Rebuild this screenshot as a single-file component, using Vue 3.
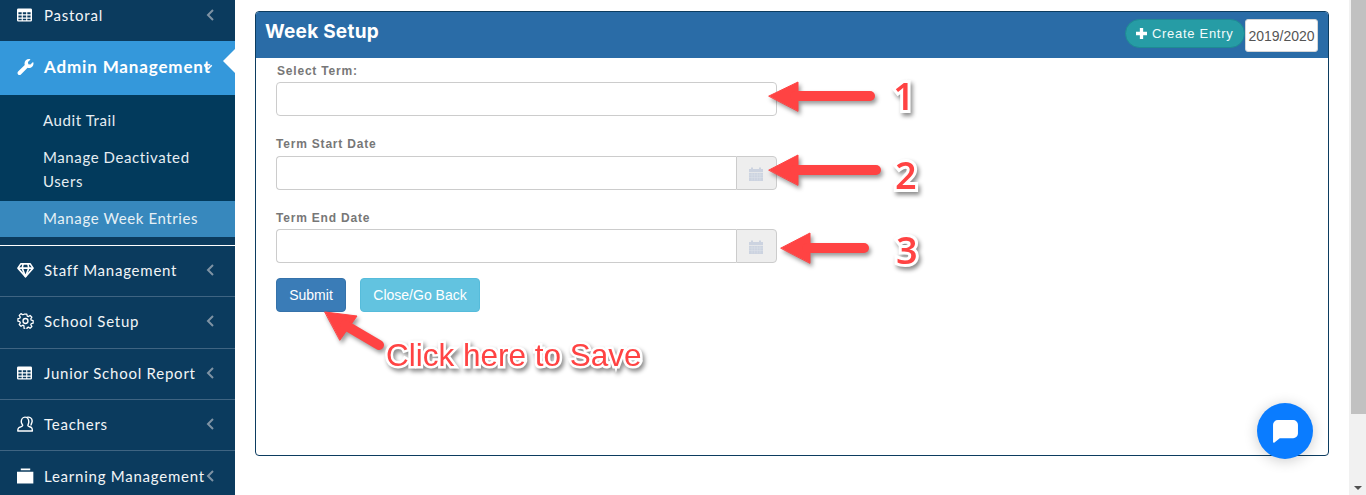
<script setup>
const angle = 'M9 3 4 8l5 5';
const lowerRows = [
  { label: 'Staff Management', icon: 'gem' },
  { label: 'School Setup', icon: 'cog' },
  { label: 'Junior School Report', icon: 'table' },
  { label: 'Teachers', icon: 'users' },
  { label: 'Learning Management', icon: 'folder' }
];
const fields = [
  { label: 'Select Term:', addon: false, cls: 'first' },
  { label: 'Term Start Date', addon: true, cls: 'second' },
  { label: 'Term End Date', addon: true, cls: 'last' }
];
</script>

<template>
  <div class="page">
    <aside class="sidebar">
      <div class="row top-row">
        <svg class="ico narrow" viewBox="0 0 16 14"><path fill="#fff" fill-rule="evenodd" d="M1.500 0h13A1.500 1.500 0 0 1 16 1.500v11a1.500 1.500 0 0 1-1.500 1.500h-13A1.500 1.500 0 0 1 0 12.500v-11A1.500 1.500 0 0 1 1.500 0zM1.500 4v2.300h3.500V4zm4.700 0v2.300h3.600V4zm4.800 0v2.300h3.500V4zM1.500 7.500v2.200h3.500V7.500zm4.700 0v2.200h3.600V7.500zm4.800 0v2.200h3.500V7.500zM1.500 10.900v1.600h3.500v-1.600zm4.700 0v1.600h3.600v-1.600zm4.800 0v1.600h3.500v-1.600z"/></svg>
        <span class="label">Pastoral</span>
        <svg class="chev" viewBox="0 0 12 16"><path :d="angle" fill="none" stroke="currentColor" stroke-width="2"/></svg>
      </div>
      <div class="row active-row">
        <svg class="ico" viewBox="0 0 512 512"><path fill="#fff" d="M507.73 109.1c-2.24-9.03-13.54-12.09-20.12-5.51l-74.36 74.36-67.88-11.31-11.31-67.88 74.36-74.36c6.62-6.62 3.43-17.9-5.66-20.16-47.38-11.74-99.55.91-136.58 37.93-39.64 39.64-50.55 97.1-34.05 147.2L18.74 402.76c-24.99 24.99-24.99 65.51 0 90.5 24.99 24.99 65.51 24.99 90.5 0l213.21-213.21c50.12 16.71 107.47 5.68 147.37-34.22 37.07-37.07 49.7-89.32 37.91-136.73z"/></svg>
        <span class="label strong">Admin Management</span>
        <svg class="chev down" viewBox="0 0 16 12"><path d="M3 3l5 5 5-5" fill="none" stroke="currentColor" stroke-width="2"/></svg>
        <span class="pointer"></span>
      </div>
      <div class="submenu">
        <a class="sub">Audit Trail</a>
        <a class="sub">Manage Deactivated Users</a>
        <a class="sub current">Manage Week Entries</a>
      </div>
      <div class="rule"></div>
      <div v-for="r in lowerRows" :key="r.label" class="row lower">
        <svg v-if="r.icon === 'gem'" class="ico" viewBox="0 0 18 16"><g fill="none" stroke="#fff" stroke-width="1.700" stroke-linejoin="round"><path d="M4 1.500h10L17 6 9 15 1 6z"/><path d="M1 6h16M6.500 1.500 5.500 6 9 15l3.500-9-1-4.500"/></g></svg>
        <svg v-else-if="r.icon === 'cog'" class="ico" viewBox="0 0 18 18"><g fill="none" stroke="#fff"><circle cx="9" cy="9" r="2.800" stroke-width="1.500"/><path stroke-width="1.500" stroke-linejoin="round" d="M7.500 1h3l.5 2.300 1.400.6 2-1.300 2.100 2.100-1.300 2 .6 1.500 2.200.5v3l-2.200.5-.6 1.400 1.300 2-2.100 2.100-2-1.300-1.400.6-.5 2.200h-3L7 14.700l-1.400-.6-2 1.300-2.100-2.100 1.300-2-.6-1.400L0 9.400v-3l2.200-.5.6-1.400-1.300-2 2.100-2.100 2 1.300L7 1.200z" transform="translate(.5 .3) scale(.95)"/></g></svg>
        <svg v-else-if="r.icon === 'table'" class="ico narrow" viewBox="0 0 16 14"><path fill="#fff" fill-rule="evenodd" d="M1.500 0h13A1.500 1.500 0 0 1 16 1.500v11a1.500 1.500 0 0 1-1.500 1.500h-13A1.500 1.500 0 0 1 0 12.500v-11A1.500 1.500 0 0 1 1.500 0zM1.500 4v2.300h3.500V4zm4.700 0v2.300h3.600V4zm4.800 0v2.300h3.500V4zM1.500 7.500v2.200h3.500V7.500zm4.700 0v2.200h3.600V7.500zm4.800 0v2.200h3.500V7.500zM1.500 10.900v1.600h3.500v-1.600zm4.700 0v1.600h3.600v-1.600zm4.800 0v1.600h3.500v-1.600z"/></svg>
        <svg v-else-if="r.icon === 'users'" class="ico" viewBox="0 0 18 17"><g fill="none" stroke="#fff" stroke-width="1.500" stroke-linejoin="round"><path d="M4.500 6a4 4.800 0 0 1 8 0c0 2-1 3-1 4.200 0 1 3 1.300 4 2.300.8.800.8 2.500.8 3.500H.8c0-1 0-2.700 1-3.500 1.100-1 4.200-1.300 4.200-2.300C6 9 4.500 8 4.500 6z"/><path d="M10 1.500c3-1 6.500.5 6 4.500-.2 1.500-1.400 3-1 4"/></g></svg>
        <svg v-else class="ico" viewBox="0 0 18 16"><path fill="#fff" d="M4 0h10v2H4zM0 3.500h17.300V16H0z"/></svg>
        <span class="label">{{ r.label }}</span>
        <svg class="chev" viewBox="0 0 12 16"><path :d="angle" fill="none" stroke="currentColor" stroke-width="2"/></svg>
      </div>
    </aside>

    <main class="main">
      <section class="panel">
        <header class="panel-head">
          <h1>Week Setup</h1>
          <div class="head-tools">
            <button class="create">
              <svg viewBox="0 0 12 12"><path d="M4.200 0h3.600v4.200H12v3.600H7.800V12H4.200V7.800H0V4.200h4.200z" fill="#fff"/></svg>
              Create Entry
            </button>
            <span class="year">2019/2020</span>
          </div>
        </header>
        <form class="form" @submit.prevent>
          <div v-for="f in fields" :key="f.label" class="field" :class="f.cls">
            <label>{{ f.label }}</label>
            <div class="control">
              <input type="text" :class="{ joined: f.addon }" />
              <span v-if="f.addon" class="addon">
                <svg viewBox="0 0 14 14"><path fill="#ccd3e0" d="M0 2.500h2V1h2v1.500h6V1h2v1.500h2V5.500H0zM0 6.200h14V14.500H0z"/><path stroke="#dfe3ea" stroke-width=".5" d="M0 8.500h14M0 11h14M3 6.200V14M5.700 6.200V14M8.300 6.200V14M11 6.200V14"/></svg>
              </span>
            </div>
          </div>
          <div class="actions">
            <button class="btn primary">Submit</button>
            <button class="btn info">Close/Go Back</button>
          </div>
        </form>
      </section>
    </main>

    <div class="scrollbar">
      <div class="thumb"></div>
      <span class="scroll-arrow"></span>
    </div>

    <svg class="arrows" viewBox="0 0 1366 495" width="1366" height="495">
      <g fill="#ff4343" stroke="#ff4343" stroke-linejoin="round" stroke-linecap="round">
        <path stroke-width="1" d="M769 96 798 82v29z"/><path stroke-width="10" fill="none" d="M795 96h75"/>
        <path stroke-width="1" d="M769 170l29-15v30z"/><path stroke-width="10" fill="none" d="M795 170h81"/>
        <path stroke-width="1" d="M781 248l29-15v30z"/><path stroke-width="10" fill="none" d="M807 248h57"/>
        <path stroke-width="1" d="M325 312l32 4-17 24z"/><path stroke-width="10" fill="none" d="M345 325l34 20"/>
      </g>
    </svg>

    <span class="note n1">1</span>
    <span class="note n2">2</span>
    <span class="note n3">3</span>
    <span class="note save">Click here to Save</span>

    <div class="chat">
      <svg viewBox="0 0 26 24"><path fill="#fff" d="M5 0h16a5 5 0 0 1 5 5v9a5 5 0 0 1-5 5H7l-5.500 4.500C.9 24 0 23.800 0 23V5a5 5 0 0 1 5-5z"/></svg>
    </div>
  </div>
</template>

<style>
html, body { margin: 0; overflow: hidden; background: #fff; }
</style>

<style scoped>
.page {
  position: relative;
  display: flex;
  width: 1366px;
  height: 495px;
  overflow: hidden;
  background: #fff;
  font-family: "Liberation Sans", Arial, sans-serif;
}
.sidebar {
  flex: 0 0 235px;
  background: #0b3b5e;
  color: #f2f5f7;
  font-family: Lato, "Noto Sans", sans-serif;
  font-size: 15px;
}
.row {
  position: relative;
  display: flex;
  align-items: center;
  box-sizing: border-box;
  padding: 0 19px 2px 17px;
}
.top-row { height: 41px; padding-bottom: 12px; }
.active-row { height: 54px; background: #3498db; color: #fff; padding-bottom: 3px; }
.lower { height: 51.33px; border-bottom: 1px solid #3f6482; }
.lower:last-child { border-bottom: 0; }
.ico { flex: 0 0 17px; width: 17px; height: 16px; margin-right: 10px; }
.ico.narrow { flex-basis: 15px; width: 15px; height: 14px; margin-right: 12px; }
.label { flex: 1; white-space: nowrap; letter-spacing: .76px; }
.strong { font-size: 17px; font-weight: 700; letter-spacing: .85px; }
.chev { flex: 0 0 12px; width: 12px; height: 16px; margin-left: -2px; color: #7f93a4; }
.chev.down { position: absolute; right: 21px; top: 22px; width: 12px; height: 9px; color: #fff; }
.pointer {
  position: absolute;
  right: 0;
  top: 8px;
  border-style: solid;
  border-width: 12px 12px 12px 0;
  border-color: transparent #fff transparent transparent;
}
.submenu {
  box-sizing: border-box;
  height: 142px;
  padding-top: 7px;
  background: #023a5c;
  display: flex;
  flex-direction: column;
}
.sub {
  display: block;
  padding: 6px 20px 6px 43px;
  line-height: 24px;
  letter-spacing: .6px;
  color: #e6edf2;
}
.sub + .sub { margin-top: 1px; }
.sub.current { box-sizing: border-box; height: 36px; padding-top: 5px; background: #3788bd; margin-top: 2px; color: #e6f0f6; }
.rule { height: 1px; margin-top: 8px; background: #fff; }

.main { flex: 1; box-sizing: border-box; padding: 11px 20px 0; min-width: 0; }
.panel {
  box-sizing: border-box;
  height: 445px;
  border: 1px solid #0c3c60;
  border-radius: 4px;
  overflow: hidden;
}
.panel-head {
  display: flex;
  justify-content: space-between;
  box-sizing: border-box;
  height: 46px;
  padding: 7px 10px 0 9px;
  background: #2a6ca7;
}
h1 {
  margin: 0;
  padding-top: 1px;
  font-family: Inter, "Open Sans", sans-serif;
  font-size: 19px;
  line-height: 24px;
  font-weight: 700;
  letter-spacing: .25px;
  color: #fff;
}
.head-tools { display: flex; align-items: flex-start; }
.create {
  display: flex;
  align-items: center;
  gap: 5px;
  box-sizing: border-box;
  width: 120px;
  height: 29px;
  padding: 0 0 0 10px;
  border: 1px solid #1f8a93;
  border-radius: 15px;
  background: #269ca5;
  color: #f1fbfb;
  font: 13px "Liberation Sans", Arial, sans-serif;
  letter-spacing: .7px;
  white-space: nowrap;
}
.create svg { width: 11px; height: 11px; flex: none; }
.year {
  box-sizing: border-box;
  width: 73px;
  height: 33px;
  border: 1px solid #d6d6d6;
  border-radius: 3px;
  background: #fff;
  color: #555;
  font-size: 14px;
  line-height: 33px;
  text-align: center;
}
.form { padding: 5px 0 0 20px; }
.field { width: 501px; margin-bottom: 20px; }
.field label {
  display: block;
  height: 17px;
  margin-bottom: 2px;
  font-size: 12px;
  line-height: 17px;
  font-weight: 700;
  letter-spacing: .8px;
  color: #777;
}
.field.first label { padding-left: 1px; }
.field.second label { margin-bottom: 3px; }
.field.last { margin-bottom: 15px; }
.control { display: flex; height: 34px; }
input {
  flex: 1;
  min-width: 0;
  box-sizing: border-box;
  height: 34px;
  border: 1px solid #ccc;
  border-radius: 4px;
  background: #fff;
  outline: 0;
}
input.joined { border-radius: 4px 0 0 4px; border-right: 0; }
.addon {
  flex: 0 0 41px;
  box-sizing: border-box;
  display: flex;
  align-items: center;
  justify-content: center;
  padding-right: 2px;
  border: 1px solid #ccc;
  border-radius: 0 4px 4px 0;
  background: #eee;
}
.addon svg { width: 14px; height: 15px; }
.actions { display: flex; gap: 14px; }
.btn {
  box-sizing: border-box;
  height: 34px;
  padding: 0;
  border: 1px solid;
  border-radius: 4px;
  color: #fff;
  font: 14px "Liberation Sans", Arial, sans-serif;
}
.primary { width: 70px; background: #3a7cb7; border-color: #3572aa; }
.info { width: 120px; background: #62c3e0; border-color: #56bcdb; }

.scrollbar {
  position: relative;
  flex: 0 0 17px;
  background: #f1f1f1;
}
.thumb { height: 414px; margin-left: 2px; width: 15px; background: #c1c1c1; }
.scroll-arrow {
  position: absolute;
  left: 5px;
  bottom: 5px;
  border-style: solid;
  border-width: 4px 4px 0;
  border-color: #505050 transparent transparent;
}

.arrows {
  position: absolute;
  left: 0;
  top: 0;
  pointer-events: none;
  filter: drop-shadow(2px 3px 2px rgba(0, 0, 0, .4));
}
.note {
  position: absolute;
  color: #ff4343;
  font-family: "Open Sans", sans-serif;
  font-size: 38px;
  font-weight: 600;
  line-height: 44px;
  -webkit-text-stroke: 6px #fff;
  paint-order: stroke fill;
  filter: drop-shadow(2px 3px 2px rgba(0, 0, 0, .45));
}
.n1 { left: 893px; top: 73px; }
.n2 { left: 895px; top: 152px; }
.n3 { left: 896px; top: 227px; }
.save {
  left: 386px;
  top: 333px;
  font-family: "Liberation Sans", Arial, sans-serif;
  font-size: 31.5px;
  font-weight: 400;
  -webkit-text-stroke-width: 5px;
  white-space: nowrap;
}
.chat {
  position: absolute;
  left: 1257px;
  top: 403px;
  display: flex;
  align-items: center;
  justify-content: center;
  width: 56px;
  height: 56px;
  border-radius: 50%;
  background: #0a7cff;
  box-shadow: 0 2px 14px rgba(0, 0, 0, .2);
}
.chat svg { width: 25px; height: 23px; }
</style>
